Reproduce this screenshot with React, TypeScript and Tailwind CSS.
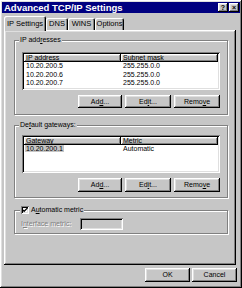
import React from "react";

const raised =
  "shadow-[inset_-1px_-1px_#000,inset_1px_1px_#fff,inset_-2px_-2px_#808080,inset_2px_2px_#dfdfdf]";
const sunken =
  "shadow-[inset_1px_1px_#808080,inset_-1px_-1px_#fff,inset_2px_2px_#000,inset_-2px_-2px_#dfdfdf]";
const etched =
  "border border-[#808080] shadow-[inset_1px_1px_#fff,1px_1px_#fff]";
const tab =
  "rounded-t-[2px] shadow-[inset_1px_1px_#fff,inset_-1px_0_#000,inset_-2px_0_#808080] flex items-center justify-center";

type Row = { a: string; b: string };

function Btn({
  children,
  w,
  h = "h-[13px]",
}: {
  children: React.ReactNode;
  w: string;
  h?: string;
}) {
  return (
    <div
      className={`${w} ${h} ${raised} bg-[#c6c6c6] flex items-center justify-center text-black`}
    >
      <span>{children}</span>
    </div>
  );
}

function ListBox({
  cols,
  rows,
  selected,
}: {
  cols: [string, string];
  rows: Row[];
  selected?: number;
}) {
  return (
    <div className={`w-[198px] h-[38px] bg-white p-[2px] ${sunken}`}>
      <div className="flex h-[8px] leading-[8px]">
        <div className={`w-[97px] pl-[2px] bg-[#c6c6c6] ${raised}`}>
          {cols[0]}
        </div>
        <div className={`flex-1 pl-[2px] bg-[#c6c6c6] ${raised}`}>
          {cols[1]}
        </div>
      </div>
      {rows.map((r, i) => (
        <div key={i} className="flex h-[8.5px] leading-[8.5px]">
          <div className="w-[97px] pl-[2px]">
            <span
              className={
                i === selected ? "bg-[#c6c6c6] px-[1px] -ml-[1px]" : ""
              }
            >
              {r.a}
            </span>
          </div>
          <div className="flex-1 pl-[2px]">{r.b}</div>
        </div>
      ))}
    </div>
  );
}

function ButtonRow({ h }: { h?: string }) {
  return (
    <div className="flex justify-end gap-[3px] mt-[5px]">
      <Btn w="w-[44px]" h={h}>
        Ad<u>d</u>...
      </Btn>
      <Btn w="w-[46px]" h={h}>
        Ed<u>i</u>t...
      </Btn>
      <Btn w="w-[46px]" h={h}>
        Remo<u>v</u>e
      </Btn>
    </div>
  );
}

export default function App() {
  const ips: Row[] = [
    { a: "10.20.200.5", b: "255.255.0.0" },
    { a: "10.20.200.6", b: "255.255.0.0" },
    { a: "10.20.200.7", b: "255.255.0.0" },
  ];
  const gateways: Row[] = [{ a: "10.20.200.1", b: "Automatic" }];

  return (
    <div
      className={`w-[242px] h-[288px] p-[2px] bg-[#c6c6c6] flex flex-col text-[7px] leading-[8px] text-black ${raised}`}
      style={{ fontFamily: '"Liberation Sans", Arial, sans-serif' }}
    >
      {/* Title bar */}
      <div className="h-[11px] bg-[#000080] flex items-center justify-between pl-[2px] pr-[1px]">
        <span className="text-white font-bold text-[9.5px] leading-[11px]">
          Advanced TCP/IP Settings
        </span>
        <div className="flex gap-[1px]">
          <div
            className={`w-[10px] h-[9px] ${raised} bg-[#c6c6c6] flex items-center justify-center font-bold text-[7px]`}
          >
            ?
          </div>
          <div
            className={`w-[10px] h-[9px] ${raised} bg-[#c6c6c6] flex items-center justify-center font-bold text-[7px]`}
          >
            ×
          </div>
        </div>
      </div>

      {/* Tabs */}
      <div className="flex items-end h-[14px] mt-[3px] ml-[2px] text-[7.5px]">
        <div
          className={`relative z-10 -mb-[1px] h-[15px] w-[42px] bg-[#c6c6c6] ${tab}`}
        >
          IP Settings
        </div>
        <div className={`h-[12px] w-[22px] ${tab}`}>DNS</div>
        <div className={`h-[12px] w-[27px] ${tab}`}>WINS</div>
        <div className={`h-[12px] w-[29px] ${tab}`}>Options</div>
      </div>

      {/* Tab panel */}
      <div
        className={`ml-[2px] w-[232px] h-[235px] pl-[10px] flex flex-col ${raised}`}
      >
        {/* IP addresses */}
        <div className={`mt-[10px] w-[214px] px-[7px] pb-[6px] ${etched}`}>
          <div className="-mt-[5px] -ml-[3px] w-fit px-[1px] bg-[#c6c6c6]">
            IP add<u>r</u>esses
          </div>
          <div className="mt-[8px]">
            <ListBox cols={["IP address", "Subnet mask"]} rows={ips} />
          </div>
          <ButtonRow />
        </div>

        {/* Default gateways */}
        <div className={`mt-[10px] w-[214px] px-[7px] pb-[5px] ${etched}`}>
          <div className="-mt-[5px] -ml-[3px] w-fit px-[1px] bg-[#c6c6c6]">
            De<u>f</u>ault gateways:
          </div>
          <div className="mt-[6px]">
            <ListBox
              cols={["Gateway", "Metric"]}
              rows={gateways}
              selected={0}
            />
          </div>
          <ButtonRow h="h-[14px]" />
        </div>

        {/* Automatic metric */}
        <div className={`mt-[12px] w-[214px] px-[7px] pb-[3px] ${etched}`}>
          <div className="-mt-[5px] -ml-[2px] w-fit px-[1px] bg-[#c6c6c6] flex items-center gap-[2px] h-[8px]">
            <div
              className={`w-[8px] h-[8px] bg-white ${sunken} flex items-center justify-center`}
            >
              <svg width="6" height="6" viewBox="0 0 7 7">
                <path
                  d="M0.5 3 L2.5 5 L6.5 1"
                  stroke="#000"
                  strokeWidth="1.4"
                  fill="none"
                />
              </svg>
            </div>
            <span>
              A<u>u</u>tomatic metric
            </span>
          </div>
          <div className="flex items-center mt-[4px] -ml-[1px] h-[12px]">
            <span className="w-[59px] text-[#808080] [text-shadow:1px_1px_0_#fff]">
              I<u>n</u>terface metric:
            </span>
            <div className={`w-[43px] h-[12px] ${sunken}`} />
          </div>
        </div>
      </div>

      {/* Dialog buttons */}
      <div className="flex justify-end gap-[2px] mt-[3px] pr-[3px]">
        <Btn w="w-[45px]" h="h-[14px]">
          OK
        </Btn>
        <Btn w="w-[45px]" h="h-[14px]">
          Cancel
        </Btn>
      </div>
    </div>
  );
}
